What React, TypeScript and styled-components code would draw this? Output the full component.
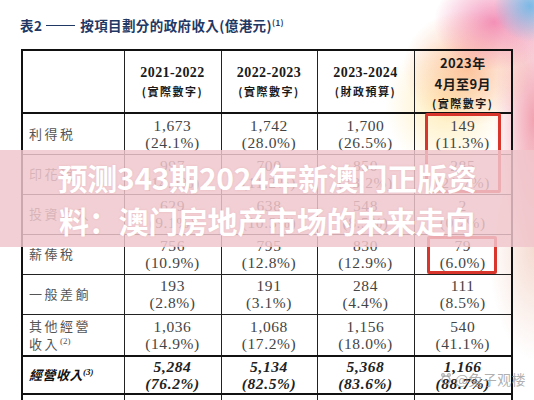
import React from "react";
import styled, { createGlobalStyle } from "styled-components";

const GlobalStyle = createGlobalStyle`
  html, body {
    margin: 0;
    padding: 0;
    background: #fff;
  }
  body {
    width: 534px;
    height: 400px;
    overflow: hidden;
  }
`;

const Page = styled.div`
  position: relative;
  width: 534px;
  height: 400px;
  overflow: hidden;
  background:
    radial-gradient(circle at 530px 6px, rgba(100, 180, 230, 0.85), rgba(100, 180, 230, 0) 36px),
    radial-gradient(ellipse 60px 48px at 494px 22px, rgba(238, 100, 155, 0.7), rgba(238, 100, 155, 0)),
    radial-gradient(ellipse 65px 58px at 468px 68px, rgba(250, 165, 115, 0.65), rgba(250, 165, 115, 0)),
    radial-gradient(ellipse 60px 65px at 445px 105px, rgba(255, 225, 140, 0.6), rgba(255, 225, 140, 0)),
    radial-gradient(ellipse 40px 130px at 534px 120px, rgba(232, 100, 125, 0.6), rgba(232, 100, 125, 0)),
    radial-gradient(ellipse 45px 110px at 534px 250px, rgba(235, 185, 165, 0.5), rgba(235, 185, 165, 0)),
    #fff;
`;

const Title = styled.h1`
  margin: 0;
  padding: 17px 0 0 20px;
  height: 49px;
  box-sizing: border-box;
  font-family: "Noto Sans CJK TC", "Liberation Serif", sans-serif;
  font-size: 13.5px;
  line-height: 17px;
  font-weight: 700;
  letter-spacing: 0.4px;
  color: #1f3864;
  white-space: nowrap;

  sup {
    font-size: 8px;
    vertical-align: 5px;
    line-height: 0;
  }
`;

const Dash = styled.span`
  display: inline-block;
  width: 29px;
  height: 1px;
  margin: 0 5px 4px 4px;
  vertical-align: middle;
  background: #1f3864;
`;

const TableArea = styled.div`
  position: relative;
  margin: 0 0 0 21px;
  width: 490px;
`;

const Table = styled.table`
  border-collapse: collapse;
  table-layout: fixed;
  width: 490px;
  border: 2px solid #111;
  background: transparent;
`;

const HeadCell = styled.th`
  height: 61px;
  padding: 0;
  border: 1px solid #222;
  border-bottom: 2px solid #111;
  text-align: center;
  vertical-align: middle;
  color: #1a1a1a;
`;

const Year = styled.div`
  font-family: "Liberation Serif", "Noto Sans CJK TC", serif;
  font-size: 14px;
  font-weight: 700;
  line-height: 18px;
  letter-spacing: 0.4px;
`;

const YearCjk = styled.div`
  font-family: "Noto Sans CJK TC", sans-serif;
  font-size: 13px;
  font-weight: 700;
  line-height: 21px;
  letter-spacing: 0.4px;
`;

const Sub = styled.div`
  font-family: "Noto Sans CJK TC", sans-serif;
  font-size: 11px;
  font-weight: 700;
  line-height: 18px;
  letter-spacing: 1.5px;
`;

const Row = styled.tr<{ $h: number; $thick?: boolean }>`
  height: ${(p) => p.$h}px;
  ${(p) => (p.$thick ? "border-top: 2px solid #111;" : "")}
`;

const Label = styled.td<{ $bold?: boolean }>`
  padding: 0 0 0 6px;
  border: 1px solid #222;
  vertical-align: middle;
  font-family: "Noto Sans CJK TC", sans-serif;
  font-size: 13px;
  line-height: 18px;
  letter-spacing: ${(p) => (p.$bold ? "0.5px" : "2.5px")};
  font-weight: ${(p) => (p.$bold ? 700 : 400)};
  font-style: ${(p) => (p.$bold ? "italic" : "normal")};
  color: ${(p) => (p.$bold ? "#111" : "#555")};

  sup {
    font-family: "Liberation Serif", serif;
    font-size: 9px;
    letter-spacing: 0;
    vertical-align: 5px;
    line-height: 0;
  }
`;

const Cell = styled.td<{ $bold?: boolean }>`
  padding: 0;
  border: 1px solid #222;
  text-align: center;
  vertical-align: middle;
  font-family: "Liberation Serif", serif;
  font-size: 15.5px;
  line-height: 17px;
  letter-spacing: 0.6px;
  color: ${(p) => (p.$bold ? "#222" : "#444")};
  font-weight: ${(p) => (p.$bold ? 700 : 400)};
  font-style: ${(p) => (p.$bold ? "italic" : "normal")};
`;

const Mark = styled.div<{ $x: number; $y: number; $w: number; $h: number }>`
  position: absolute;
  left: ${(p) => p.$x}px;
  top: ${(p) => p.$y}px;
  width: ${(p) => p.$w}px;
  height: ${(p) => p.$h}px;
  box-sizing: border-box;
  border: 3px solid #d8362c;
  border-radius: 2px;
  pointer-events: none;
`;

const Watermark = styled.div`
  position: absolute;
  left: 418px;
  top: 321px;
  display: flex;
  align-items: center;
  gap: 2px;
  white-space: nowrap;
  font-family: "Noto Sans CJK SC", sans-serif;
  font-size: 14px;
  line-height: 18px;
  color: rgba(150, 150, 150, 0.75);
  letter-spacing: 0.3px;
`;

const Banner = styled.div`
  position: absolute;
  left: 0;
  top: 150px;
  width: 534px;
  height: 97px;
  display: flex;
  flex-direction: column;
  align-items: center;
  justify-content: center;
  background: rgba(239, 198, 204, 0.84);
  font-family: "Noto Sans CJK SC", sans-serif;
  font-size: 30px;
  font-weight: 700;
  line-height: 43px;
  letter-spacing: -0.3px;
  color: #fff;
  text-shadow: 0 0 2px rgba(200, 120, 130, 0.25);
`;

type RowData = {
  label: React.ReactNode;
  values: [string, string][];
  h: number;
  bold?: boolean;
  thick?: boolean;
};

const rows: RowData[] = [
  { label: "利得税", h: 41, values: [["1,673", "(24.1%)"], ["1,742", "(28.0%)"], ["1,700", "(26.5%)"], ["149", "(11.3%)"]] },
  { label: "印花稅", h: 40, values: [["997", "(14.4%)"], ["700", "(11.2%)"], ["850", "(13.2%)"], ["285", "(21.7%)"]] },
  { label: "投資收入", h: 40, values: [["629", "(9.1%)"], ["638", "(10.3%)"], ["548", "(8.5%)"], ["2", "(0.2%)"]] },
  { label: "薪俸稅", h: 40, values: [["756", "(10.9%)"], ["795", "(12.8%)"], ["830", "(12.9%)"], ["79", "(6.0%)"]] },
  { label: "一般差餉", h: 40, values: [["193", "(2.8%)"], ["191", "(3.1%)"], ["284", "(4.4%)"], ["111", "(8.5%)"]] },
  {
    label: (
      <>
        其他經營
        <br />
        收入<sup>(2)</sup>
      </>
    ),
    h: 42,
    values: [["1,036", "(14.9%)"], ["1,068", "(17.2%)"], ["1,156", "(18.0%)"], ["540", "(41.1%)"]],
  },
  {
    label: (
      <>
        經營收入<sup>(3)</sup>
      </>
    ),
    h: 38,
    bold: true,
    thick: true,
    values: [["5,284", "(76.2%)"], ["5,134", "(82.5%)"], ["5,368", "(83.6%)"], ["1,166", "(88.7%)"]],
  },
];

export default function App() {
  return (
    <Page>
      <GlobalStyle />
      <Title>
        表2<Dash />按項目劃分的政府收入(億港元)<sup>(1)</sup>
      </Title>
      <TableArea>
        <Table>
          <colgroup>
            <col style={{ width: 102 }} />
            <col style={{ width: 97 }} />
            <col style={{ width: 96 }} />
            <col style={{ width: 97 }} />
            <col style={{ width: 98 }} />
          </colgroup>
          <thead>
            <tr>
              <HeadCell />
              <HeadCell>
                <Year>2021-2022</Year>
                <Sub>(實際數字)</Sub>
              </HeadCell>
              <HeadCell>
                <Year>2022-2023</Year>
                <Sub>(實際數字)</Sub>
              </HeadCell>
              <HeadCell>
                <Year>2023-2024</Year>
                <Sub>(財政預算)</Sub>
              </HeadCell>
              <HeadCell>
                <YearCjk>2023年</YearCjk>
                <YearCjk>4月至9月</YearCjk>
                <Sub>(實際數字)</Sub>
              </HeadCell>
            </tr>
          </thead>
          <tbody>
            {rows.map((r, i) => (
              <Row key={i} $h={r.h} $thick={r.thick}>
                <Label $bold={r.bold}>{r.label}</Label>
                {r.values.map(([n, p], j) => (
                  <Cell key={j} $bold={r.bold}>
                    {n}
                    <br />
                    {p}
                  </Cell>
                ))}
              </Row>
            ))}
            <Row $h={40} $thick>
              <Label />
              <Cell />
              <Cell />
              <Cell />
              <Cell />
            </Row>
          </tbody>
        </Table>
        <Mark $x={404} $y={64} $w={76} $h={80} />
        <Mark $x={406} $y={187} $w={70} $h={38} />
        <Watermark>
          <svg width="14" height="14" viewBox="0 0 14 14" fill="none" stroke="currentColor" strokeWidth="1.3">
            <circle cx="7" cy="8" r="4" />
            <circle cx="4" cy="3" r="1.3" />
            <circle cx="10" cy="3" r="1.3" />
          </svg>
          @兔子观楼
        </Watermark>
      </TableArea>
      <Banner>
        <div>预测343期2024年新澳门正版资</div>
        <div>料：澳门房地产市场的未来走向</div>
      </Banner>
    </Page>
  );
}
